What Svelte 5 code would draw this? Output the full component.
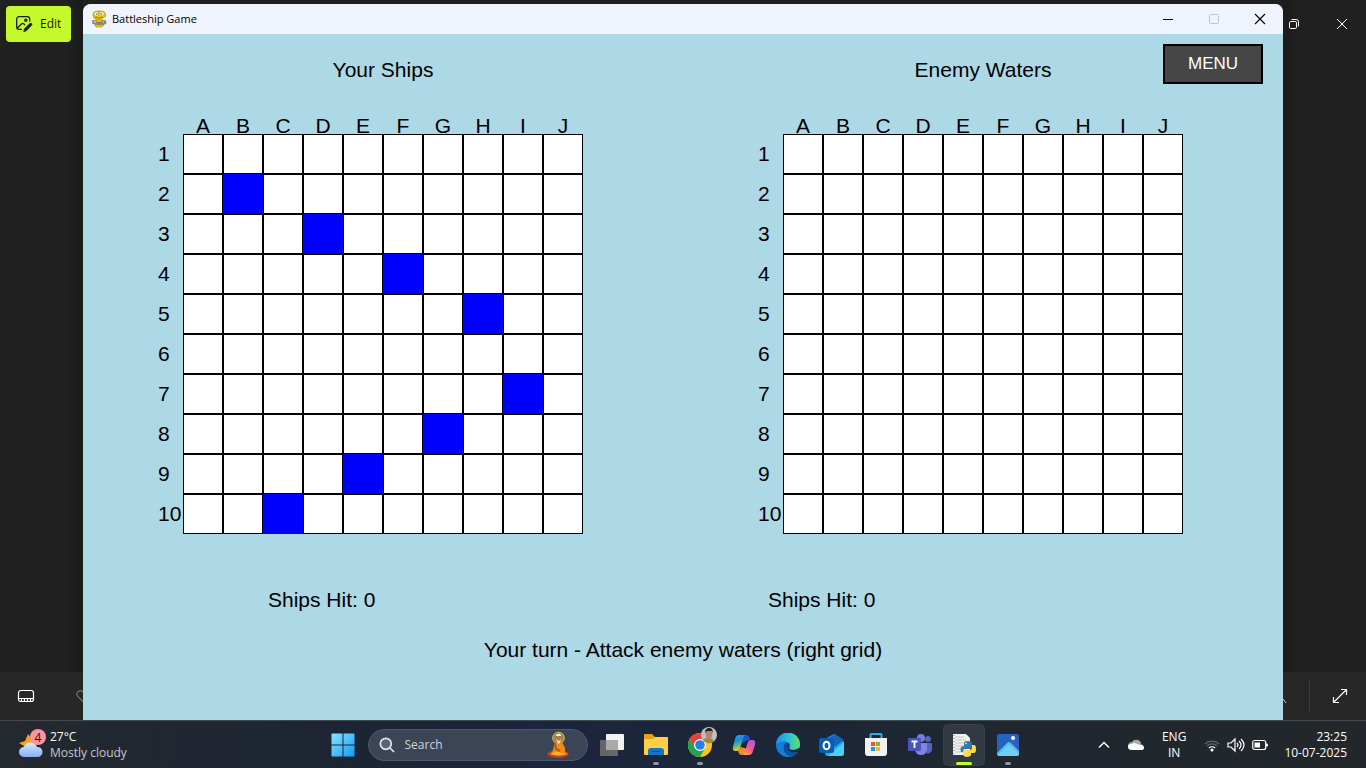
<script>
  const letters = 'ABCDEFGHIJ'.split('');
  const rows = [1, 2, 3, 4, 5, 6, 7, 8, 9, 10];
  const ships = new Set(['B2', 'D3', 'F4', 'H5', 'I7', 'G8', 'E9', 'C10']);
  const boards = [
    { title: 'Your Ships', own: true, hits: 0 },
    { title: 'Enemy Waters', own: false, hits: 0 }
  ];
</script>

<main class="screen">
  <div class="stage">
    <aside class="viewer left">
      <div class="tools">
        <button class="edit">
          <svg width="18" height="18" viewBox="0 0 18 18" fill="none" stroke="#17200a" stroke-width="1.3">
            <path d="M7 14.3H4A2.3 2.3 0 0 1 1.700 12V4A2.300 2.300 0 0 1 4 1.700h8.400A2.300 2.300 0 0 1 14.700 4v2.500M2.500 13l4.200-4.200q1-.9 2 0l1.300 1.300" />
            <circle cx="10.8" cy="5.3" r="1.1" />
            <path d="m8.700 16.700.7-3 5.400-5.300q1-.7 1.800.1t0 1.800l-5.200 5.500z" fill="#17200a" stroke-width="0.6" />
          </svg>
          <span>Edit</span>
        </button>
      </div>
      <div class="strip">
        <button class="bare film" aria-label="Filmstrip">
          <svg width="18" height="14" viewBox="0 0 18 14" fill="none" stroke="#fff" stroke-width="1.2">
            <rect x="1.5" y="1.5" width="15" height="11" rx="2.2" />
            <path d="M1.500 9.500h15M4.500 9.500v3M7.500 9.500v3M10.500 9.500v3M13.500 9.500v3" />
          </svg>
        </button>
        <i class="rule"></i>
        <button class="bare heart" aria-label="Favourite">
          <svg width="14" height="14" viewBox="0 0 14 14" fill="none" stroke="#777" stroke-width="1.1">
            <path d="M7 12.600 1.800 7.400C-1 4 3.600-.6 7 3c3.400-3.600 8 1 5.200 4.400z" />
          </svg>
        </button>
      </div>
    </aside>

    <section class="window">
      <header class="titlebar">
        <svg width="15" height="18" viewBox="0 0 15 18">
          <path d="M2 2q5-2 10-.5 2 2 1.500 5L10 8.500 8 10H5L2 8Q0 5 2 2" fill="#eccb12" stroke="#a98d11" stroke-width=".7" />
          <circle cx="4.300" cy="4" r="2.300" fill="#fbf3c4" stroke="#c3a51b" stroke-width=".7" />
          <circle cx="10" cy="3.800" r="2.300" fill="#fbf3c4" stroke="#c3a51b" stroke-width=".7" />
          <circle cx="4.800" cy="4.300" r=".8" fill="#666" /><circle cx="9.500" cy="4" r=".8" fill="#666" />
          <path d="M3 7q4 2 8 0" stroke="#9d810d" fill="none" />
          <path d="M4 10h7l1 5-2 2H4l-1-2z" fill="#e8c514" stroke="#a98d11" stroke-width=".6" />
          <path d="M.5 10.500h3l1.500 2h4l2.500-2.500 2.500 1v2.500l-3 1H4l-3.500-1z" fill="#8c8c86" stroke="#6b6b63" stroke-width=".5" />
          <path d="M2 12h2M11 12h1" stroke="#eee" /><path d="M6.500 12.800h2" stroke="#c64437" />
        </svg>
        <h1>Battleship Game</h1>
        <div class="controls">
          <button class="bare" aria-label="Minimize"><svg width="12" height="12" viewBox="0 0 12 12"><path d="M1 6.500h10" stroke="#000" /></svg></button>
          <button class="bare" aria-label="Maximize" disabled><svg width="12" height="12" viewBox="0 0 12 12"><rect x="1.5" y="1.5" width="9" height="9" rx="1" fill="none" stroke="#c0c2c8" /></svg></button>
          <button class="bare" aria-label="Close"><svg width="12" height="12" viewBox="0 0 12 12"><path d="m1 1 10 10M11 1 1 11" stroke="#000" stroke-width="1.1" /></svg></button>
        </div>
      </header>

      <div class="game">
        <button class="menu">MENU</button>
        <div class="boards">
          {#each boards as b}
            <section class="board">
              <h2>{b.title}</h2>
              <table aria-label={b.title}>
                <thead>
                  <tr><td></td>{#each letters as l}<th scope="col">{l}</th>{/each}</tr>
                </thead>
                <tbody>
                  {#each rows as r}
                    <tr>
                      <th scope="row">{r}</th>
                      {#each letters as l}<td class="cell" class:ship={b.own && ships.has(l + r)}></td>{/each}
                    </tr>
                  {/each}
                </tbody>
              </table>
              <p class="hits" class:own={b.own}>Ships Hit: {b.hits}</p>
            </section>
          {/each}
        </div>
        <p class="turn">Your turn - Attack enemy waters (right grid)</p>
      </div>
    </section>

    <aside class="viewer right">
      <div class="tools">
        <button class="bare" aria-label="Restore"><svg width="12" height="12" viewBox="0 0 12 12" fill="none" stroke="#fff"><rect x="1.5" y="3.5" width="7" height="7" rx="1.2" /><path d="M3.500 1.500h4.700q2.300 0 2.300 2.300v4.700" /></svg></button>
        <button class="bare" aria-label="Close viewer"><svg width="12" height="12" viewBox="0 0 12 12"><path d="m1 1 10 10M11 1 1 11" stroke="#fff" /></svg></button>
      </div>
      <div class="strip">
        <svg class="lens" width="4" height="16" viewBox="0 0 4 16"><path d="m0 11 3 4" stroke="#ccc" /></svg>
        <i class="rule"></i>
        <button class="bare" aria-label="Full screen"><svg width="16" height="16" viewBox="0 0 16 16" fill="none" stroke="#fff" stroke-width="1.2"><path d="M1.500 14.500 14.500 1.500M9 1.500h5.500V7M1.500 9v5.500H7" /></svg></button>
      </div>
    </aside>
  </div>

  <footer class="taskbar">
    <button class="bare weather">
      <svg width="30" height="32" viewBox="0 0 30 32">
        <defs><linearGradient id="cloud" x2="0" y2="1"><stop stop-color="#d9e8ff" /><stop offset="1" stop-color="#83aef5" /></linearGradient></defs>
        <path d="m12 5 3 4 6-1-1 12H7l1-3-5-3 6-2z" fill="#f6a21b" />
        <path d="M8 28a5 5 0 0 1 0-10 7 7 0 0 1 13 0 5 5 0 0 1 1 10z" fill="url(#cloud)" />
        <circle cx="22" cy="8" r="8" fill="#ff949c" />
        <text x="22" y="12.500" text-anchor="middle" font-size="12" fill="#261215">4</text>
      </svg>
      <span class="lines"><b>27°C</b><em>Mostly cloudy</em></span>
    </button>

    <nav class="apps" aria-label="Applications">
      <button class="bare app start" aria-label="Start">
        <svg width="24" height="24" viewBox="0 0 24 24"><defs><linearGradient id="win" x2="1" y2="1"><stop stop-color="#8be2ff" /><stop offset="1" stop-color="#119cf8" /></linearGradient></defs><path d="M1 .5h10.500v11H.5V1zM12.500.5H23l.5.5v10.500h-11zM.5 12.500h11v11H1l-.5-.5zM12.500 12.500h11V23l-.5.5H12.500z" fill="url(#win)" /></svg>
      </button>
      <label class="search">
        <svg width="16" height="16" viewBox="0 0 16 16" fill="#596474" stroke="#e4e6ea" stroke-width="1.7"><circle cx="6.800" cy="6.800" r="5.500" /><path d="m11 11 4 4" /></svg>
        <input type="search" placeholder="Search" aria-label="Search" />
        <svg width="24" height="28" viewBox="0 0 24 28">
          <circle cx="12.500" cy="7" r="5.800" fill="#9a8a48" stroke="#d4bd55" />
          <path d="M1 23q2-3 6-3l10 0q5 1 6 3-3 4-11 4T1 23" fill="#c93a22" />
          <path d="M9 11q4-2 7 0l3 6v4l3 2q-7 3-17 0l2-4z" fill="#ef8a13" />
          <path d="M4 23q7-3 9-2t7 2q-8 3-16 0" fill="#ffb028" />
          <path d="M10 5q2-3 5 0v5l-2 3-3-2z" fill="#b4774c" /><path d="M10 4q3-3 5 0v1h-5z" fill="#eee" /><path d="m10 8 3 2 2-2-1 4-2 1z" fill="#e6dcd1" />
          <path d="m9 12 1 6 4 2" stroke="#a85d2b" stroke-width="2" fill="none" />
        </svg>
      </label>
      <button class="bare app" aria-label="Task view"><svg width="24" height="24" viewBox="0 0 24 24"><rect x="6" y="1" width="18" height="16" rx="1" fill="#f2f2f2" /><rect y="7" width="18" height="16" rx="1" fill="#666" /><path d="M6 7h12v10H6z" fill="#aaa" /></svg></button>
      <button class="bare app open" aria-label="File Explorer"><svg width="24" height="24" viewBox="0 0 24 24"><path d="M0 2q0-1 1-1h7l3 3h12q1 0 1 1v8H0z" fill="#e4a019" /><path d="M0 6h9l2-2h12q1 0 1 1v16q0 1-1 1H1q-1 0-1-1z" fill="#ffcf46" /><path d="M4 22v-4q0-3 3-3h10q3 0 3 3v4z" fill="#1475c6" /><path d="M8 18h8q1 0 1 1H7q0-1 1-1" fill="#075292" /></svg></button>
      <button class="bare app open chrome" aria-label="Chrome">
        <svg width="30" height="30" viewBox="0 0 30 30"><circle cx="13" cy="18" r="12" fill="#fbc61a" /><path d="M2.600 12a12 12 0 0 1 20.800 0H13L7 20z" fill="#e94035" /><path d="M2.600 12A12 12 0 0 0 13 30l5-9H8z" fill="#24a453" /><circle cx="13" cy="18" r="6" fill="#fff" /><circle cx="13" cy="18" r="4.800" fill="#277fe8" /><circle cx="22" cy="8" r="8" fill="#bfc0c4" /><path d="M15.500 13q6-5 12 1a8 8 0 0 1-12-1" fill="#a28a3c" /><ellipse cx="22" cy="7" rx="3.300" ry="4.800" fill="#b98370" /><path d="M18 6q0-5 4-5t4 5l-1-2h-5z" fill="#252022" /></svg>
      </button>
      <button class="bare app" aria-label="Copilot"><svg width="24" height="24" viewBox="0 0 24 24">
        <defs><linearGradient id="c1" x2=".3" y2="1"><stop stop-color="#27a7f0" /><stop offset=".4" stop-color="#168bdd" /><stop offset=".7" stop-color="#5fbd75" /><stop offset="1" stop-color="#f4d022" /></linearGradient><linearGradient id="c2" x1="1" x2=".3" y2="1"><stop stop-color="#a45bf5" /><stop offset=".55" stop-color="#f0578c" /><stop offset="1" stop-color="#ffa052" /></linearGradient></defs>
        <path d="M14 2q3 0 3.500 3l.7 2.500h-3Q13 7.500 12 10L9 8l1-4q1-2 4-2" fill="#2150c8" />
        <path d="M7 2h7.500Q12 2 11 5.500L8.500 14Q7.500 18 4.500 18H3.500Q0 18 1 13.500L3 6Q4 2 7 2" fill="url(#c1)" />
        <path d="M10 22q-3 0-3.500-3L6 17q2 0 3-3l6 2-1.500 4Q13 22 10 22" fill="#f28a3c" />
        <path d="M17 22H9.500Q12 22 13 18.500l2.500-8.500q1-3 4-3h1Q24 7 23 11.500L21 18q-1 4-4 4" fill="url(#c2)" />
      </svg></button>
      <button class="bare app" aria-label="Edge"><svg width="24" height="24" viewBox="0 0 24 24"><defs><linearGradient id="edge" x2="1"><stop stop-color="#2188e8" /><stop offset=".5" stop-color="#24c0da" /><stop offset="1" stop-color="#66df61" /></linearGradient></defs><circle cx="12" cy="12" r="12" fill="#137dd7" /><path d="M0 11A12 12 0 0 1 24 12q0 5-7 5-4 0-3-3 1-2-1-4Q8 6 0 11" fill="url(#edge)" /><path d="M8 12q-2 9 6 11 5 0 8-4-6 2-9-2-3-3 0-7-4-1-5 2" fill="#0b50a2" /><path d="M12 10q2 1 1 4-1 3 4 3 3 0 6-2l1 0-1 4-1 0q-7 2-10-3-1-3 0-6" fill="#1b2a45" /></svg></button>
      <button class="bare app" aria-label="Outlook"><svg width="26" height="24" viewBox="0 0 26 24"><path d="m6 6 9-5 10 8v11q0 3-3 3H9q-3 0-3-3z" fill="#23a5e9" /><path d="m8 6 8-5 9 6-11 8-6-3z" fill="#1564ba" /><path d="M25 9v11q0 3-3 3H9z" fill="#48d0f3" /><rect y="5" width="15" height="15" rx="2" fill="#075fb5" /><ellipse cx="7.500" cy="12.500" rx="3" ry="3.700" fill="none" stroke="#fff" stroke-width="2" /></svg></button>
      <button class="bare app" aria-label="Store"><svg width="24" height="24" viewBox="0 0 24 24"><path d="M6.500 8V2q0-1 1-1h9q1 0 1 1v6" fill="none" stroke="#27afe8" stroke-width="2" /><path d="M1 5h22v15q0 3-3 3H4q-3 0-3-3z" fill="#f1f1f1" /><path d="M7 9h4v4H7z" fill="#f0502b" /><path d="M12 9h4v4h-4z" fill="#7dba28" /><path d="M7 14h4v4H7z" fill="#159adc" /><path d="M12 14h4v4h-4z" fill="#fbb718" /></svg></button>
      <button class="bare app" aria-label="Teams"><svg width="24" height="24" viewBox="0 0 24 24"><circle cx="13" cy="5" r="4" fill="#7480df" /><circle cx="20" cy="6" r="3" fill="#5962c4" /><path d="M17 10h6q1 0 1 1v5q0 4-5 5z" fill="#5962c4" /><path d="M8 10h11v6q0 6-6 6-5 0-6-5z" fill="#7d85e4" /><rect y="5" width="13" height="13" rx="1" fill="#4b55b9" /><path d="M3.500 8.500h6M6.500 8.500V15" stroke="#fff" stroke-width="1.800" /></svg></button>
      <button class="bare app active open" aria-label="Python"><svg width="24" height="24" viewBox="0 0 24 24"><path d="M1 1h13l4 4v17H1z" fill="#f2f2f2" /><path d="M3 4h9M3 7h11M3 10h11M3 13h11M3 16h11M3 19h11" stroke="#c4c4c4" /><path d="M2 2v20" stroke="#777" stroke-dasharray="1 2" /><path d="M12 13V10q0-2 4-2t4 2v4q0 2-2 2h-5q-2 0-2 3H9q-2-6 3-6" fill="#3977a7" /><path d="M20 12h2q2 0 2 4t-2 4h-3v2q-1 2-4 2t-4-2v-3q0-2 3-2h4q2 0 2-3z" fill="#ffda4b" /><circle cx="14" cy="10.500" r=".8" fill="#fff" /></svg></button>
      <button class="bare app open" aria-label="Photos"><svg width="24" height="24" viewBox="0 0 24 24"><defs><linearGradient id="photo" x2="1" y2="1"><stop stop-color="#176ac4" /><stop offset="1" stop-color="#4153b5" /></linearGradient></defs><rect x="1" y="1" width="22" height="22" rx="2.500" fill="url(#photo)" /><path d="m1 20 10-10q2-2 4 0l8 8v3q0 2-2 2H3q-2 0-2-2z" fill="#54bdec" /><path d="m2 22 9-9q2-2 4 0l8 8q0 2-2 2H3z" fill="#8ee4ff" opacity=".45" /><circle cx="17" cy="5" r="2" fill="#fff" /></svg></button>
    </nav>

    <div class="tray">
      <button class="bare" aria-label="Hidden icons"><svg width="12" height="8" viewBox="0 0 12 8"><path d="m1 6.500 5-5 5 5" fill="none" stroke="#fff" stroke-width="1.500" /></svg></button>
      <button class="bare cloud" aria-label="OneDrive"><svg width="16" height="12" viewBox="0 0 16 12"><path d="M3 10Q0 9 0 6q1-3 4-3 2-3 6-2 3 1 3 4 3 1 3 4z" fill="#aaa" /><path d="M4 11q-4 0-4-3t4-3q2-2 5 0l3 1q4 0 4 3 0 2-3 2z" fill="#fff" /></svg></button>
      <button class="bare lang"><span>ENG</span><span>IN</span></button>
      <button class="bare status" aria-label="Network, volume and battery">
        <svg width="16" height="14" viewBox="0 0 16 14" fill="none" stroke-width="1.300"><path d="M1 6a10 10 0 0 1 14 0M3 8a7 7 0 0 1 10 0" stroke="#606670" /><path d="M5 10a4.300 4.300 0 0 1 6 0" stroke="#fff" /><circle cx="8" cy="12" r="1.500" fill="#fff" /></svg>
        <svg width="18" height="16" viewBox="0 0 18 16" fill="none" stroke="#fff" stroke-width="1.200"><path d="M1 6h3l4-4v12l-4-4H1zM10 6q2 2 0 4M12 4q4 4 0 8M14 2q6 6 0 12" /></svg>
        <svg width="16" height="12" viewBox="0 0 16 12"><rect x=".7" y="1.500" width="13" height="9" rx="2" fill="none" stroke="#fff" stroke-width="1.200" /><path d="M2.500 3.500H8v5H2.500zM14 4.500h1q1 0 1 1.500t-1 1.500h-1z" fill="#fff" /></svg>
      </button>
      <button class="bare clock"><time>23:25</time><time>10-07-2025</time></button>
    </div>
  </footer>
</main>

<style>
  :global(body) { margin: 0; background: #202020; }
  .screen { min-height: 100vh; display: flex; flex-direction: column; font: 12px/16px "Open Sans", "Noto Sans", sans-serif; color: #fff; overflow: hidden; }
  h1, h2, p { margin: 0; font-weight: 400; }
  button { font: inherit; color: inherit; }
  svg { display: block; flex: none; }
  .bare { border: 0; padding: 0; background: none; display: flex; align-items: center; justify-content: center; }
  .stage { flex: 1; display: grid; grid-template-columns: 83px 1fr 83px; }
  .viewer { display: flex; flex-direction: column; justify-content: space-between; background: #202020; overflow: hidden; }
  .left { background: linear-gradient(90deg, #202020 80%, #1b1b1b); }
  .right { background: linear-gradient(270deg, #202020 80%, #1b1b1b); }
  .left .tools { padding: 6px; }
  .edit { display: flex; align-items: center; gap: 7px; height: 36px; width: 65px; padding: 0 0 0 9px; border: 0; border-radius: 4px; background: #c4fa2b; color: #17200a; }
  .right .tools { display: flex; gap: 36px; padding: 18px 0 0 5px; }
  .strip { display: flex; align-items: center; height: 48px; background: #272727; }
  .film { margin-left: 17px; }
  .rule { width: 1px; height: 32px; background: #3a3a3a; }
  .left .rule { margin: 0 20px 0 21px; }
  .right .rule { margin: 0 22px; }
  .window { margin-top: 4px; border-radius: 8px 8px 0 0; overflow: hidden; display: flex; flex-direction: column; background: #add8e6; color: #000; }
  .titlebar { height: 30px; display: flex; align-items: center; padding-left: 9px; gap: 5px; background: #eff3fb; }
  h1 { font-size: 11px; line-height: 16px; }
  .controls { display: flex; gap: 34px; margin-left: auto; padding-right: 17px; }
  .game { flex: 1; position: relative; font: 21px/28px "Liberation Sans Narrow", "Arial Narrow", "Liberation Sans", sans-serif; padding: 22px 0 20px; }
  .menu { position: absolute; top: 10px; right: 20px; width: 100px; height: 40px; padding: 0; border: 2px solid #000; background: #464646; color: #fff; font-size: 17px; }
  .boards { display: grid; grid-template-columns: 1fr 1fr; }
  .board { display: flex; flex-direction: column; align-items: center; }
  h2 { font-size: 21px; line-height: 28px; }
  table { border-collapse: separate; border-spacing: 0; table-layout: fixed; width: 425px; margin: 33px 25px 0 0; }
  thead td, tbody th { width: 25px; padding: 0; }
  th { font-weight: 400; padding: 0; }
  thead th { width: 40px; line-height: 17px; }
  tbody th { height: 40px; line-height: 40px; text-align: left; box-sizing: border-box; }
  .cell { box-sizing: border-box; width: 40px; height: 40px; padding: 0; border: 1px solid #000; background: #fff; }
  .ship { border-color: #00f; background: #00f; }
  .hits { box-sizing: border-box; width: 430px; margin-top: 52px; }
  .own { padding-left: 100px; }
  .turn { text-align: center; margin-top: 22px; }
  .taskbar { display: grid; grid-template-columns: 1fr auto 1fr; align-items: center; height: 47px; border-top: 1px solid #45484c; background: linear-gradient(90deg, #24292f, #1c2535 28%, #1b263d 42%, #1d2635 60%, #20272e 80%, #23272c); }
  .weather { justify-self: start; gap: 4px; padding-left: 16px; }
  .lines { display: flex; flex-direction: column; text-align: left; }
  .lines b, .lines em { font-weight: 400; font-style: normal; }
  .lines em { color: #c5c8cc; }
  .apps { display: flex; align-items: center; gap: 4px; margin-right: 16px; }
  .app { position: relative; width: 40px; height: 40px; border-radius: 4px; }
  .search { display: flex; align-items: center; width: 220px; height: 32px; margin-left: 1px; padding: 0 17px 0 10px; box-sizing: border-box; border: 1px solid #4e5969; border-radius: 16px; background: #3b4556; gap: 10px; }
  input { min-width: 0; flex: 1; border: 0; padding: 0; outline: 0; background: none; color: #fff; font: inherit; }
  input::placeholder { color: #d0d3d9; opacity: 1; }
  .chrome svg { margin: 0 0 6px 4px; }
  .open::after { content: ""; position: absolute; left: 50%; bottom: 0; width: 6px; height: 3px; margin-left: -3px; border-radius: 2px; background: #92969f; }
  .active { background: #313943; box-shadow: 0 0 0 1px #3a414a; }
  .active::after { width: 16px; margin-left: -8px; background: #c4fa2b; }
  .tray { justify-self: end; display: flex; align-items: center; padding-right: 19px; }
  .cloud { margin-left: 18px; }
  .lang { flex-direction: column; margin-left: 18px; }
  .status { gap: 7px; margin-left: 18px; }
  .clock { flex-direction: column; align-items: flex-end; margin-left: 16px; }
</style>
